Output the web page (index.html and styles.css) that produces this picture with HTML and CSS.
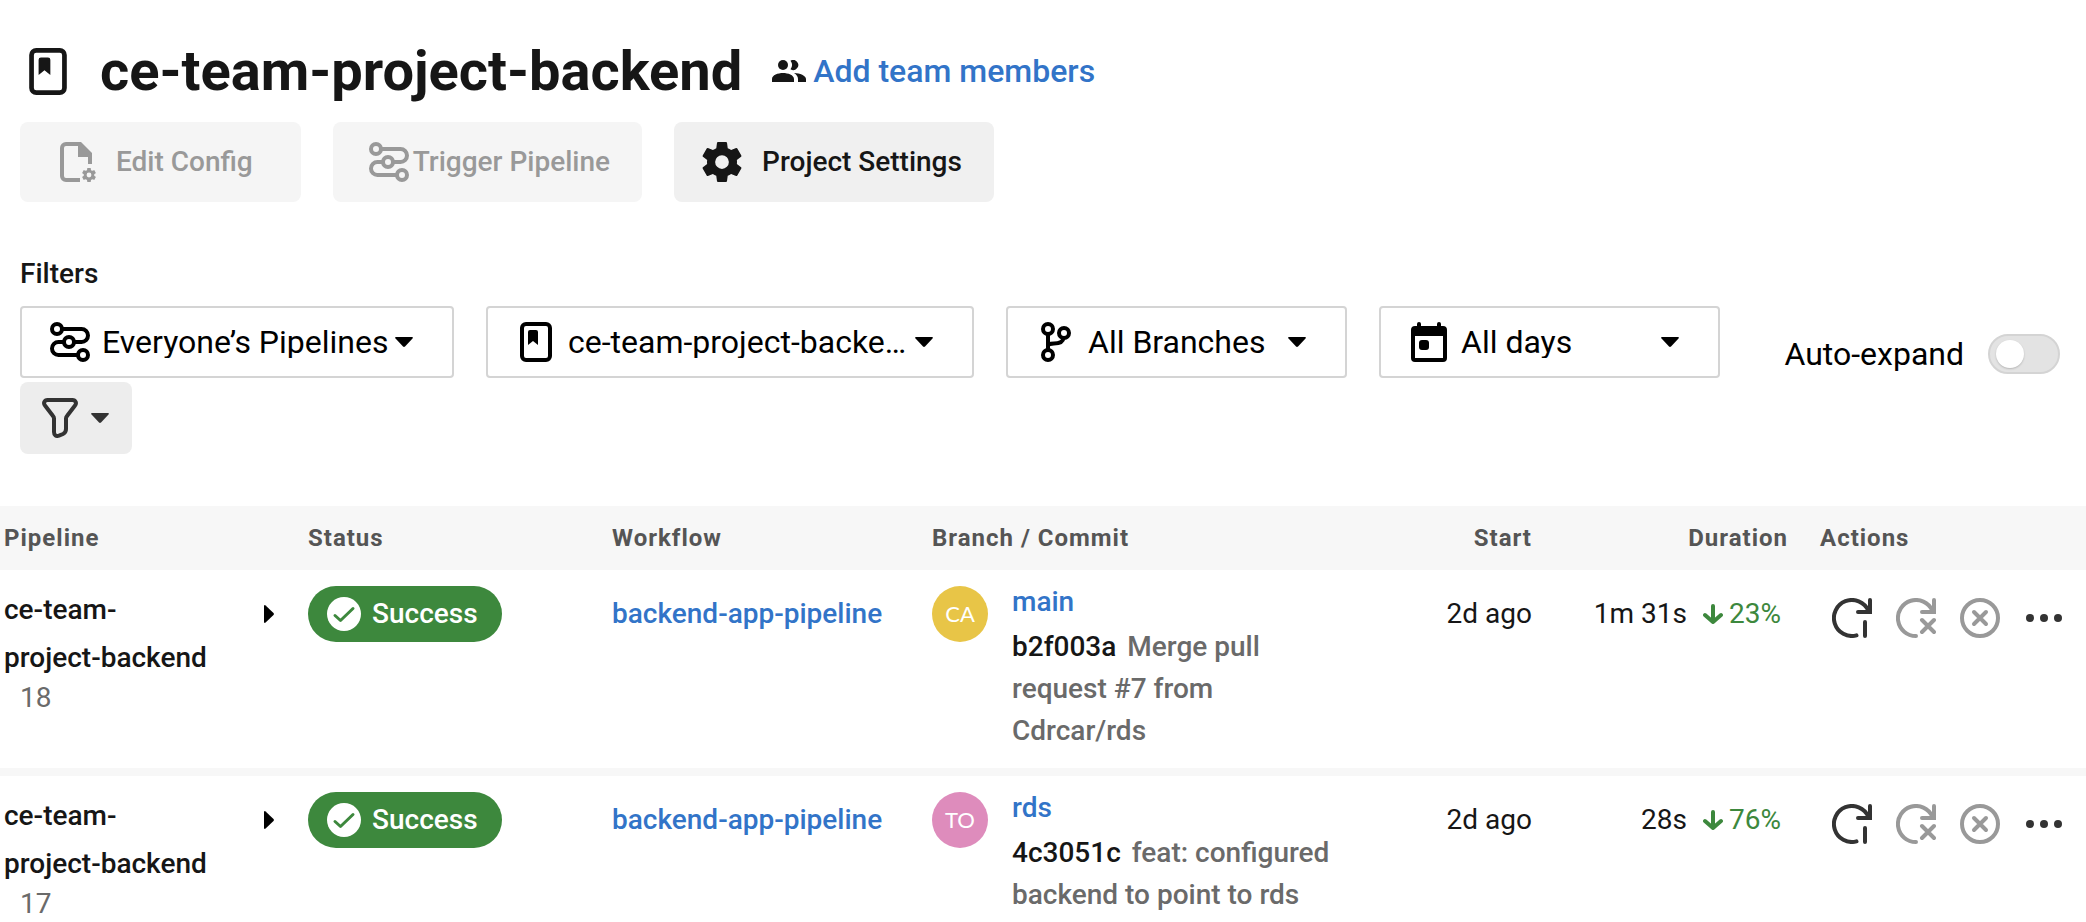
FILE: index.html
```html
<!DOCTYPE html>
<html lang="en">
<head>
<meta charset="utf-8">
<title>ce-team-project-backend</title>
<link rel="stylesheet" href="styles.css">
</head>
<body>
<svg class="sprite" aria-hidden="true">
  <symbol id="book" viewBox="0 0 32 40"><rect x="2" y="2" width="28" height="36" rx="4" fill="none" stroke="currentColor" stroke-width="4"/><path d="M10 8h6a2 2 0 0 1 2 2v13l-5-4-5 4V10a2 2 0 0 1 2-2z" fill="currentColor"/></symbol>
  <symbol id="pipe" viewBox="0 0 40 40"><g fill="none" stroke="currentColor" stroke-width="4"><circle cx="7" cy="7" r="5"/><circle cx="19" cy="20" r="5"/><circle cx="33" cy="33" r="5"/><path d="M12 7h19.500a6.500 6.500 0 0 1 0 13H24M14 20H8.500a6.500 6.500 0 0 0 0 13H28"/></g></symbol>
  <symbol id="gear" viewBox="2.400 2.400 19.200 19.200"><path fill="currentColor" d="M19.140 12.940c.04-.3.06-.61.06-.94 0-.32-.02-.64-.07-.94l2.030-1.580c.18-.14.23-.41.12-.61l-1.920-3.320c-.12-.22-.37-.29-.59-.22l-2.390.96c-.5-.38-1.030-.7-1.620-.94l-.36-2.540c-.04-.24-.24-.41-.48-.41h-3.840c-.24 0-.43.17-.47.41l-.36 2.540c-.59.24-1.130.57-1.620.94l-2.390-.96c-.22-.08-.47 0-.59.22L2.740 8.870c-.12.21-.08.47.12.61l2.030 1.580c-.05.3-.09.63-.09.94s.02.64.07.94l-2.030 1.580c-.18.14-.23.41-.12.61l1.920 3.320c.12.22.37.29.59.22l2.390-.96c.5.38 1.030.7 1.620.94l.36 2.540c.05.24.24.41.48.41h3.840c.24 0 .44-.17.47-.41l.36-2.540c.59-.24 1.130-.56 1.620-.94l2.390.96c.22.08.47 0 .59-.22l1.920-3.320c.12-.22.07-.47-.12-.61l-2.010-1.580zM12 15.300a3.300 3.300 0 1 1 0-6.600 3.300 3.300 0 0 1 0 6.600z"/></symbol>
  <symbol id="file" viewBox="0 0 36 40"><path d="M19 2H6a4 4 0 0 0-4 4v28a4 4 0 0 0 4 4h14M30 12v10" fill="none" stroke="currentColor" stroke-width="4"/><path d="M18 0h3l11 11v4H18z" fill="currentColor"/><use href="#gear" x="22" y="26" width="14" height="14"/></symbol>
  <symbol id="branch" viewBox="0 0 30 40"><g fill="none" stroke="currentColor" stroke-width="4"><circle cx="7" cy="7" r="5"/><circle cx="23" cy="11" r="5"/><circle cx="7" cy="33" r="5"/><path d="M7 12v16M7 24c0-2 3-2.500 6-2.500 6 0 9-1.500 9.500-5.500"/></g></symbol>
  <symbol id="calendar" viewBox="0 0 36 40"><path fill="currentColor" fill-rule="evenodd" d="M6 2a2 2 0 0 1 4 0v2h16V2a2 2 0 0 1 4 0v2h2a4 4 0 0 1 4 4v28a4 4 0 0 1-4 4H4a4 4 0 0 1-4-4V8a4 4 0 0 1 4-4h2zM4 14v22h28V14z"/><rect x="8" y="18" width="10" height="10" rx="3" fill="currentColor"/></symbol>
  <symbol id="people" viewBox="0 0 34 22"><g fill="currentColor"><circle cx="11" cy="5" r="5"/><path d="M18.500.8a5 5 0 1 1 0 8.400 7 7 0 0 0 0-8.400zM0 19c0-4 6-6 11-6s11 2 11 6v3H0zM22 13c6 .3 12 2.500 12 6v3h-8v-3c0-2.500-1.500-4.500-4-6z"/></g></symbol>
  <symbol id="funnel" viewBox="0 0 36 40"><path fill="none" stroke="currentColor" stroke-width="4" d="M5.500 2h25c3 0 4.500 3 2.500 5.500L25 18c-.8 1-1 1.600-1 2.600V31c0 2.500-1 4-3 5l-4 1.700c-3 1-5-.7-5-3.700V20.600c0-1-.2-1.600-1-2.600L3 7.500C1 5 2.500 2 5.500 2z"/></symbol>
  <symbol id="caret" viewBox="0 0 18 10"><path fill="currentColor" d="M1 0h16q1.500.3.500 1.600L10 9.500q-1 .8-2 0L.5 1.600Q-.5.3 1 0z"/></symbol>
  <symbol id="play" viewBox="0 0 10 18"><path fill="currentColor" d="M0 1q.3-1.500 1.600-.5L9.500 8q.8 1 0 2l-7.900 7.500Q.3 18.500 0 17z"/></symbol>
  <symbol id="check" viewBox="0 0 34 34"><circle cx="17" cy="17" r="17" fill="#fff"/><path d="M8 18.500l5.500 5L26 11.500" fill="none" stroke="#3d883d" stroke-width="3" stroke-linecap="round" stroke-linejoin="round"/></symbol>
  <symbol id="down" viewBox="0 0 20 20"><path d="M10 2v16M2 11l8 7 8-7" fill="none" stroke="currentColor" stroke-width="4" stroke-linecap="round" stroke-linejoin="round"/></symbol>
  <symbol id="rerun" viewBox="0 0 40 40"><path d="M24.500 37.400A18 18 0 1 1 36.300 12.500M38 2v12H26M33 24v14" fill="none" stroke="currentColor" stroke-width="4" stroke-linecap="round"/></symbol>
  <symbol id="rerun-failed" viewBox="0 0 40 40"><path d="M20 38A18 18 0 1 1 36.300 12.500M38 2v12H26M26 22l12 12M38 22L26 34" fill="none" stroke="currentColor" stroke-width="4" stroke-linecap="round"/></symbol>
  <symbol id="cancel" viewBox="0 0 40 40"><circle cx="20" cy="20" r="18" fill="none" stroke="currentColor" stroke-width="4"/><path d="M14 14l12 12M26 14L14 26" fill="none" stroke="currentColor" stroke-width="4" stroke-linecap="round"/></symbol>
  <symbol id="dots" viewBox="0 0 40 40"><g fill="currentColor"><circle cx="6" cy="20" r="4"/><circle cx="20" cy="20" r="4"/><circle cx="34" cy="20" r="4"/></g></symbol>
</svg>
<main class="page">
  <header class="heading">
    <svg class="heading-icon"><use href="#book"/></svg>
    <h1 class="title">ce-team-project-backend</h1>
    <svg class="people"><use href="#people"/></svg>
    <a class="link team-link" href="#team">Add team members</a>
  </header>
  <div class="toolbar">
    <button class="button edit" disabled><svg class="icon-file"><use href="#file"/></svg>Edit Config</button>
    <button class="button trigger" disabled><svg class="icon"><use href="#pipe"/></svg>Trigger Pipeline</button>
    <button class="button settings"><svg class="icon"><use href="#gear"/></svg>Project Settings</button>
  </div>
  <section class="filters">
    <h2 class="filters-title">Filters</h2>
    <div class="filter-row">
      <label class="picker owner"><svg class="picker-icon"><use href="#pipe"/></svg><select class="select" aria-label="Pipelines"><option>Everyone’s Pipelines</option></select><svg class="picker-caret"><use href="#caret"/></svg></label>
      <label class="picker project"><svg class="picker-icon"><use href="#book"/></svg><select class="select" aria-label="Project"><option>ce-team-project-backend</option></select><svg class="picker-caret"><use href="#caret"/></svg></label>
      <label class="picker"><svg class="picker-icon"><use href="#branch"/></svg><select class="select" aria-label="Branch"><option>All Branches</option></select><svg class="picker-caret"><use href="#caret"/></svg></label>
      <label class="picker"><svg class="picker-icon"><use href="#calendar"/></svg><select class="select" aria-label="Date"><option>All days</option></select><svg class="picker-caret"><use href="#caret"/></svg></label>
      <label class="auto-expand">Auto-expand<input class="toggle" type="checkbox" role="switch"></label>
    </div>
    <button class="filter-button" aria-label="More filters"><svg class="icon-funnel"><use href="#funnel"/></svg><svg class="caret"><use href="#caret"/></svg></button>
  </section>
  <table class="runs">
    <colgroup><col class="col-pipeline"><col class="col-status"><col class="col-workflow"><col><col class="col-start"><col class="col-duration"><col class="col-actions"></colgroup>
    <thead>
      <tr><th class="first">Pipeline</th><th>Status</th><th>Workflow</th><th>Branch / Commit</th><th class="end">Start</th><th class="end">Duration</th><th class="last">Actions</th></tr>
    </thead>
    <tbody>
      <tr>
        <td class="first"><div class="pipeline"><div><div class="name">ce-team-project-backend</div><div class="number">18</div></div><button class="plain expand" aria-label="Expand"><svg class="play"><use href="#play"/></svg></button></div></td>
        <td><span class="badge"><svg class="check"><use href="#check"/></svg>Success</span></td>
        <td><a class="link tall" href="#workflow">backend-app-pipeline</a></td>
        <td><div class="branch"><span class="avatar gold">CA</span><div><a class="link branch-name" href="#main">main</a><p class="commit"><a class="sha" href="#b2f003a">b2f003a</a> Merge pull request #7 from Cdrcar/rds</p></div></div></td>
        <td class="end"><span class="tall">2d ago</span></td>
        <td class="end"><div class="duration">1m 31s<span class="delta"><svg class="down"><use href="#down"/></svg>23%</span></div></td>
        <td class="last"><div class="actions"><button class="plain" aria-label="Rerun"><svg class="icon"><use href="#rerun"/></svg></button><button class="plain" aria-label="Rerun from failed" disabled><svg class="icon"><use href="#rerun-failed"/></svg></button><button class="plain" aria-label="Cancel" disabled><svg class="icon"><use href="#cancel"/></svg></button><button class="plain" aria-label="More"><svg class="icon"><use href="#dots"/></svg></button></div></td>
      </tr>
      <tr>
        <td class="first"><div class="pipeline"><div><div class="name">ce-team-project-backend</div><div class="number">17</div></div><button class="plain expand" aria-label="Expand"><svg class="play"><use href="#play"/></svg></button></div></td>
        <td><span class="badge"><svg class="check"><use href="#check"/></svg>Success</span></td>
        <td><a class="link tall" href="#workflow">backend-app-pipeline</a></td>
        <td><div class="branch"><span class="avatar pink">TO</span><div><a class="link branch-name" href="#rds">rds</a><p class="commit"><a class="sha" href="#4c3051c">4c3051c</a> feat: configured backend to point to rds</p></div></div></td>
        <td class="end"><span class="tall">2d ago</span></td>
        <td class="end"><div class="duration">28s<span class="delta"><svg class="down"><use href="#down"/></svg>76%</span></div></td>
        <td class="last"><div class="actions"><button class="plain" aria-label="Rerun"><svg class="icon"><use href="#rerun"/></svg></button><button class="plain" aria-label="Rerun from failed" disabled><svg class="icon"><use href="#rerun-failed"/></svg></button><button class="plain" aria-label="Cancel" disabled><svg class="icon"><use href="#cancel"/></svg></button><button class="plain" aria-label="More"><svg class="icon"><use href="#dots"/></svg></button></div></td>
      </tr>
    </tbody>
  </table>
</main>
</body>
</html>
```
FILE: styles.css
```css
* { box-sizing: border-box; }
body { margin: 0; background: #fff; color: #161616; font: 400 28px/32px Roboto, "Liberation Sans", sans-serif; }
button, select { font: inherit; color: inherit; }
svg { display: block; flex: none; }
.sprite { position: absolute; width: 0; height: 0; }
.page { height: 100vh; overflow: hidden; }
.link { color: #3274c8; font-weight: 500; text-decoration: none; }

.heading { display: flex; align-items: center; height: 66px; margin: 38px 28px 18px; }
.heading-icon { width: 40px; height: 47px; }
.title { margin: 0 30px 0 32px; font-size: 56px; line-height: 66px; font-weight: 700; }
.people { width: 34px; height: 22px; margin-right: 7px; }
.team-link { font-size: 32px; line-height: 40px; }

.toolbar { display: flex; gap: 32px; padding: 0 20px; }
.button { display: flex; align-items: center; height: 80px; border: 0; border-radius: 8px; background: #f0f0f0; font-weight: 500; }
.button:disabled { background: #f5f5f5; color: #999; }
.edit { gap: 20px; padding: 0 48px 0 40px; }
.trigger { gap: 4px; padding: 0 32px 0 36px; }
.settings { gap: 20px; padding: 0 32px 0 28px; }
.icon { width: 40px; height: 40px; }
.icon-file { width: 36px; height: 40px; }

.filters { padding: 56px 26px 52px 20px; }
.filters-title { margin: 0 0 16px; font-size: 28px; line-height: 32px; font-weight: 500; }
.filter-row { display: flex; gap: 32px; margin-bottom: 4px; color: #000; font-size: 32px; }
.picker { display: grid; grid-template-columns: 100px 1fr 59px; align-items: center; width: 341px; height: 72px; }
.owner { width: 434px; }
.project { width: 488px; }
.picker > * { grid-row: 1; }
.picker-icon { grid-column: 1; justify-self: center; width: 40px; height: 40px; pointer-events: none; z-index: 1; }
.picker-caret { grid-column: 3; width: 18px; height: 10px; pointer-events: none; z-index: 1; }
.select { grid-column: 1 / -1; width: 100%; height: 72px; padding: 0 62px 0 80px; appearance: none; border: 2px solid #d4d4d4; border-radius: 4px; background: #fff; text-overflow: ellipsis; overflow: hidden; white-space: nowrap; }
.auto-expand { display: flex; align-items: center; align-self: flex-end; gap: 24px; height: 48px; margin-left: auto; }
.toggle { display: flex; align-items: center; appearance: none; width: 72px; height: 40px; margin: 0; padding: 0 6px; border: 2px solid #d4d4d4; border-radius: 20px; background: #e3e3e3; }
.toggle::before { content: ""; width: 28px; height: 28px; border-radius: 50%; background: #fff; box-shadow: 0 1px 2px #0003; }
.toggle:checked::before { margin-left: auto; }
.filter-button { display: flex; align-items: center; gap: 13px; height: 72px; padding: 0 23px 0 22px; border: 0; border-radius: 8px; background: #ededed; color: #333; }
.icon-funnel { width: 36px; height: 40px; }
.caret { width: 18px; height: 10px; }

.runs { width: 100%; table-layout: fixed; border-collapse: collapse; }
.col-pipeline { width: 308px; }
.col-status { width: 304px; }
.col-workflow { width: 320px; }
.col-start { width: 191px; }
.col-duration { width: 256px; }
.col-actions { width: 298px; }
th { height: 64px; padding: 0; background: #f7f7f7; color: #555; font-size: 24px; font-weight: 700; letter-spacing: 1px; text-align: left; }
td { padding: 16px 0; vertical-align: top; border-bottom: 8px solid #f7f7f7; }
.first { padding-left: 4px; }
.last { padding-left: 32px; }
.end { text-align: right; }
.pipeline { display: flex; justify-content: space-between; padding-right: 34px; }
.name { width: 208px; line-height: 48px; font-weight: 500; }
.number { padding-left: 16px; color: #6a6a6a; }
.plain { padding: 0; border: 0; background: none; color: #333; }
.plain:disabled { color: #999; }
.expand { height: 56px; color: #000; }
.play { width: 10px; height: 18px; }
.badge { display: inline-flex; align-items: center; gap: 11px; height: 56px; padding: 0 24px 0 19px; border-radius: 28px; background: #3d883d; color: #fff; font-weight: 500; vertical-align: top; }
.check { width: 34px; height: 34px; }
.tall { line-height: 56px; }
.branch { display: flex; gap: 24px; }
.avatar { flex: none; width: 56px; height: 56px; border-radius: 50%; color: #fff; font-family: Lato, Roboto, sans-serif; font-size: 22px; line-height: 56px; text-align: center; }
.gold { background: #e8c547; }
.pink { background: #de8cbc; }
.branch-name { display: block; margin-bottom: 8px; }
.commit { margin: 0; color: #6a6a6a; line-height: 42px; font-weight: 500; }
.sha { margin-right: 4px; color: #161616; text-decoration: none; }
.duration { display: flex; justify-content: flex-end; align-items: center; gap: 16px; height: 56px; padding-right: 7px; }
.delta { display: flex; align-items: center; gap: 6px; color: #3d883d; }
.down { width: 20px; height: 20px; }
.actions { display: flex; align-items: center; gap: 24px; height: 64px; padding-left: 12px; }
```
